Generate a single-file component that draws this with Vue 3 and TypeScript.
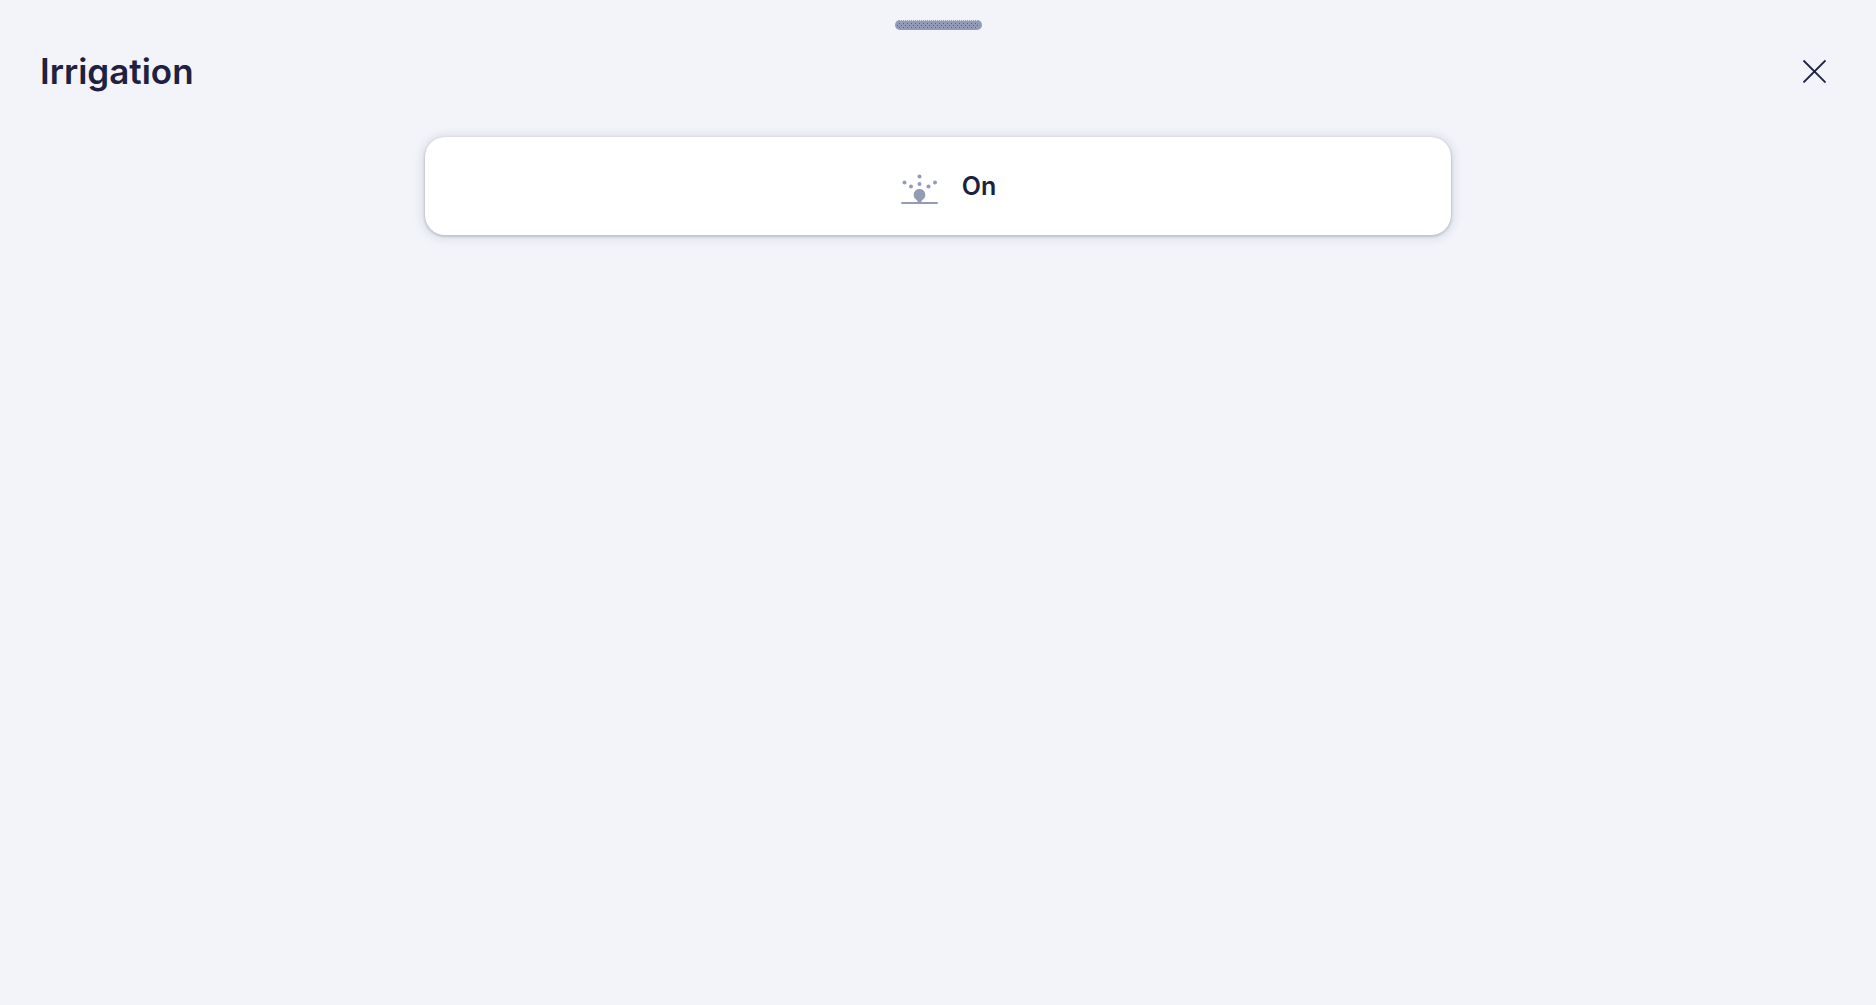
<script setup lang="ts">
import { ref } from 'vue'

interface Dot {
  x: number
  y: number
}

const title = 'Irrigation'
const on = ref<boolean>(true)
const drops: Dot[] = [
  { x: 19.5, y: 6.5 },
  { x: 19.5, y: 14 },
  { x: 4.5, y: 12.5 },
  { x: 11, y: 16.5 },
  { x: 28.5, y: 16.5 },
  { x: 35, y: 12.5 },
]
</script>

<template>
  <main class="sheet">
    <div class="grip">
      <svg width="88" height="10" viewBox="0 0 88 10" aria-hidden="true">
        <defs>
          <pattern id="grain" width="4" height="4" patternUnits="userSpaceOnUse">
            <rect x="3" y="1" width="1" height="1" fill="#5b607c" />
            <rect x="1" y="3" width="1" height="1" fill="#5b607c" />
          </pattern>
        </defs>
        <rect x="1" width="87" height="10" rx="5" fill="#919bb8" />
        <path d="M6 .5H84" stroke="#dfe3ee" stroke-dasharray="1 1" />
        <rect x="3" y="2" width="82" height="6" fill="url(#grain)" />
      </svg>
    </div>
    <header class="header">
      <h1 class="title">{{ title }}</h1>
      <button class="close" type="button" aria-label="Close">
        <svg width="24" height="24" viewBox="0 0 24 24" aria-hidden="true">
          <path d="M1.5 1.5 23.500 23.500M23.500 1.5 1.5 23.500" fill="none" stroke="#1e2140" stroke-width="1.8" />
        </svg>
      </button>
    </header>
    <button class="card" type="button" :aria-pressed="on" @click="on = !on">
      <span class="icon">
        <svg width="40" height="36" viewBox="0 0 40 36" fill="#929cb5" aria-hidden="true">
          <circle v-for="(d, i) in drops" :key="i" :cx="d.x" :cy="d.y" r="2" />
          <path d="M19.5 19a5.8 5.8 0 0 1 3.4 10.5Q21.500 30.500 21 32.500h-3Q17.500 30.500 16.100 29.500A5.8 5.8 0 0 1 19.5 19z" />
          <rect x="1" y="32" width="37" height="2" rx="1" />
        </svg>
      </span>
      <span class="state">{{ on ? 'On' : 'Off' }}</span>
    </button>
  </main>
</template>

<style>
body {
  margin: 0;
  background: #f2f4fa;
}
</style>

<style scoped>
.sheet {
  box-sizing: border-box;
  min-height: 100vh;
  padding: 20px 40px;
  background: #f2f4fa;
  color: #1e2140;
  font-family: Inter, "Liberation Sans", sans-serif;
}
.grip {
  display: flex;
  justify-content: center;
}
.grip svg,
.close svg,
.icon svg {
  display: block;
}
.header {
  display: flex;
  align-items: center;
  justify-content: space-between;
  height: 82px;
}
.title {
  margin: 0;
  font-size: 35px;
  line-height: 40px;
  font-weight: 600;
}
.close {
  padding: 10px;
  border: 0;
  background: none;
  cursor: pointer;
}
.card {
  display: flex;
  align-items: center;
  justify-content: center;
  width: 100%;
  max-width: 1026px;
  height: 98px;
  margin: 25px auto 0;
  padding: 0;
  border: 0;
  border-radius: 20px;
  background: #fff;
  box-shadow: 0 1px 2px 1px rgba(29, 31, 60, 0.16), 0 1px 10px 3px rgba(29, 31, 60, 0.1);
  color: inherit;
  font-family: inherit;
  cursor: pointer;
}
.icon {
  box-sizing: border-box;
  display: flex;
  justify-content: center;
  width: 82px;
  padding: 4px 2px 0 0;
}
.state {
  font-size: 25px;
  line-height: 32px;
  font-weight: 600;
}
</style>
